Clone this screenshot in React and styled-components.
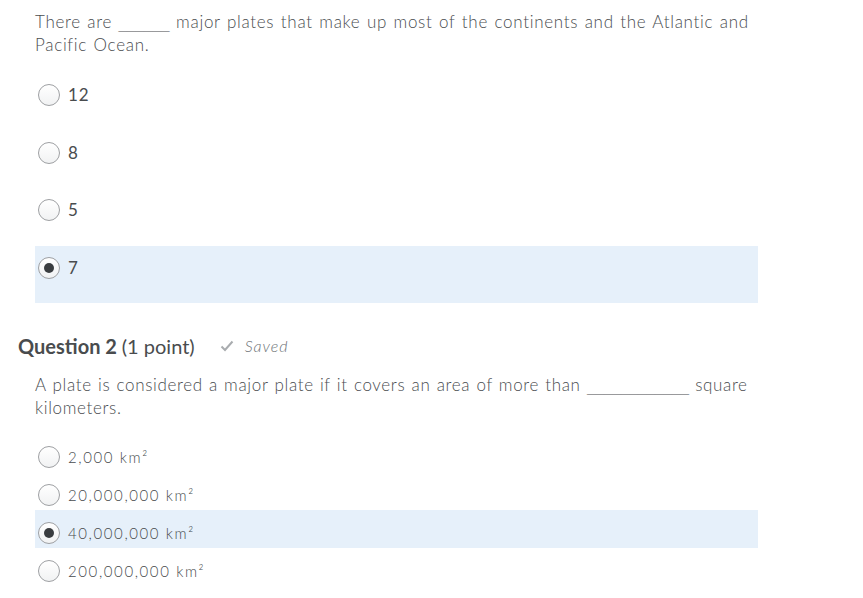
import React from 'react';
import styled, { createGlobalStyle } from 'styled-components';

const GlobalStyle = createGlobalStyle`
    body {
        margin: 0;
        background: #ffffff;
        font-family: Lato, "Open Sans", sans-serif;
        color: #494c4e;
    }
`

const Page = styled.div`
    width: 863px;
    padding-top: 10px;
`

const Question = styled.section`
    padding-left: 35px;
    width: 723px;
`

const Prompt = styled.p`
    margin: 0 0 ${props => props.gap}px 0;
    font-size: 17px;
    font-weight: 300;
    letter-spacing: ${props => props.ls}px;
    word-spacing: ${props => props.ws}px;
    line-height: 23px;
    color: #4a4d50;
`

const Blank = styled.span`
    font-family: "DejaVu Sans", sans-serif;
    line-height: 0;
    letter-spacing: 0;
    word-spacing: 0;
`

const Option = styled.label`
    display: flex;
    align-items: flex-start;
    height: ${props => props.h}px;
    box-sizing: border-box;
    padding: ${props => props.top}px 0 0 3px;
    background: ${props => props.checked ? '#e6f0fa' : 'transparent'};
`

const Radio = styled.span`
    flex: none;
    width: 22px;
    height: 22px;
    box-sizing: border-box;
    border-radius: 50%;
    border: 1px solid #9ea0a3;
    background: linear-gradient(#ffffff, #f1f2f3);
    display: flex;
    align-items: center;
    justify-content: center;
    &::after {
        content: '';
        display: ${props => props.checked ? 'block' : 'none'};
        width: 10px;
        height: 10px;
        border-radius: 50%;
        background: #3a3d40;
    }
`

const OptionText = styled.span`
    margin-left: 8px;
    font-size: ${props => props.size}px;
    font-weight: ${props => props.weight || 400};
    line-height: 22px;
    color: #494c4e;
    letter-spacing: ${props => props.spacing || 0}px;
`

const Header = styled.div`
    display: flex;
    align-items: center;
    padding-left: 18px;
    margin: 32px 0 16px 0;
    height: 22px;
`

const HeaderTitle = styled.h2`
    margin: 0;
    font-size: 20px;
    font-weight: 700;
    color: #494c4e;
`

const Points = styled.span`
    font-weight: 400;
`

const Saved = styled.span`
    display: flex;
    align-items: center;
    margin-left: 25px;
    font-size: 16px;
    font-weight: 300;
    letter-spacing: 1px;
    font-style: italic;
    color: #6e7376;
    svg {
        margin-right: 11px;
    }
`

const q1Options = ['12', '8', '5', '7'];
const q2Options = ['2,000 km²', '20,000,000 km²', '40,000,000 km²', '200,000,000 km²'];

const App = () => {
  return (
    <Page>
        <GlobalStyle />
        <Question>
            <Prompt gap={17} ls={0.7} ws={1.2}>
                There are <Blank>______</Blank> major plates that make up most of the continents and the Atlantic and Pacific Ocean.
            </Prompt>
            {q1Options.map((o, i) => (
                <Option key={o} h={i === 3 ? 57 : 57.5} top={11} checked={i === 3}>
                    <Radio checked={i === 3} />
                    <OptionText size={17} spacing={1}>{o}</OptionText>
                </Option>
            ))}
        </Question>
        <Header>
            <HeaderTitle>Question 2 <Points>(1 point)</Points></HeaderTitle>
            <Saved>
                <svg width="14" height="12" viewBox="0 0 14 12">
                    <polyline points="1.5,6.5 5,10 12.5,1.5" fill="none" stroke="#a9acaf" strokeWidth="2" />
                </svg>
                Saved
            </Saved>
        </Header>
        <Question>
            <Prompt gap={15} ls={0.65} ws={1}>
                A plate is considered a major plate if it covers an area of more than <Blank>____________</Blank> square kilometers.
            </Prompt>
            {q2Options.map((o, i) => (
                <Option key={o} h={38} top={12} checked={i === 2}>
                    <Radio checked={i === 2} />
                    <OptionText size={15} weight={300} spacing={1.6}>{o}</OptionText>
                </Option>
            ))}
        </Question>
    </Page>
  )
}

export default App
